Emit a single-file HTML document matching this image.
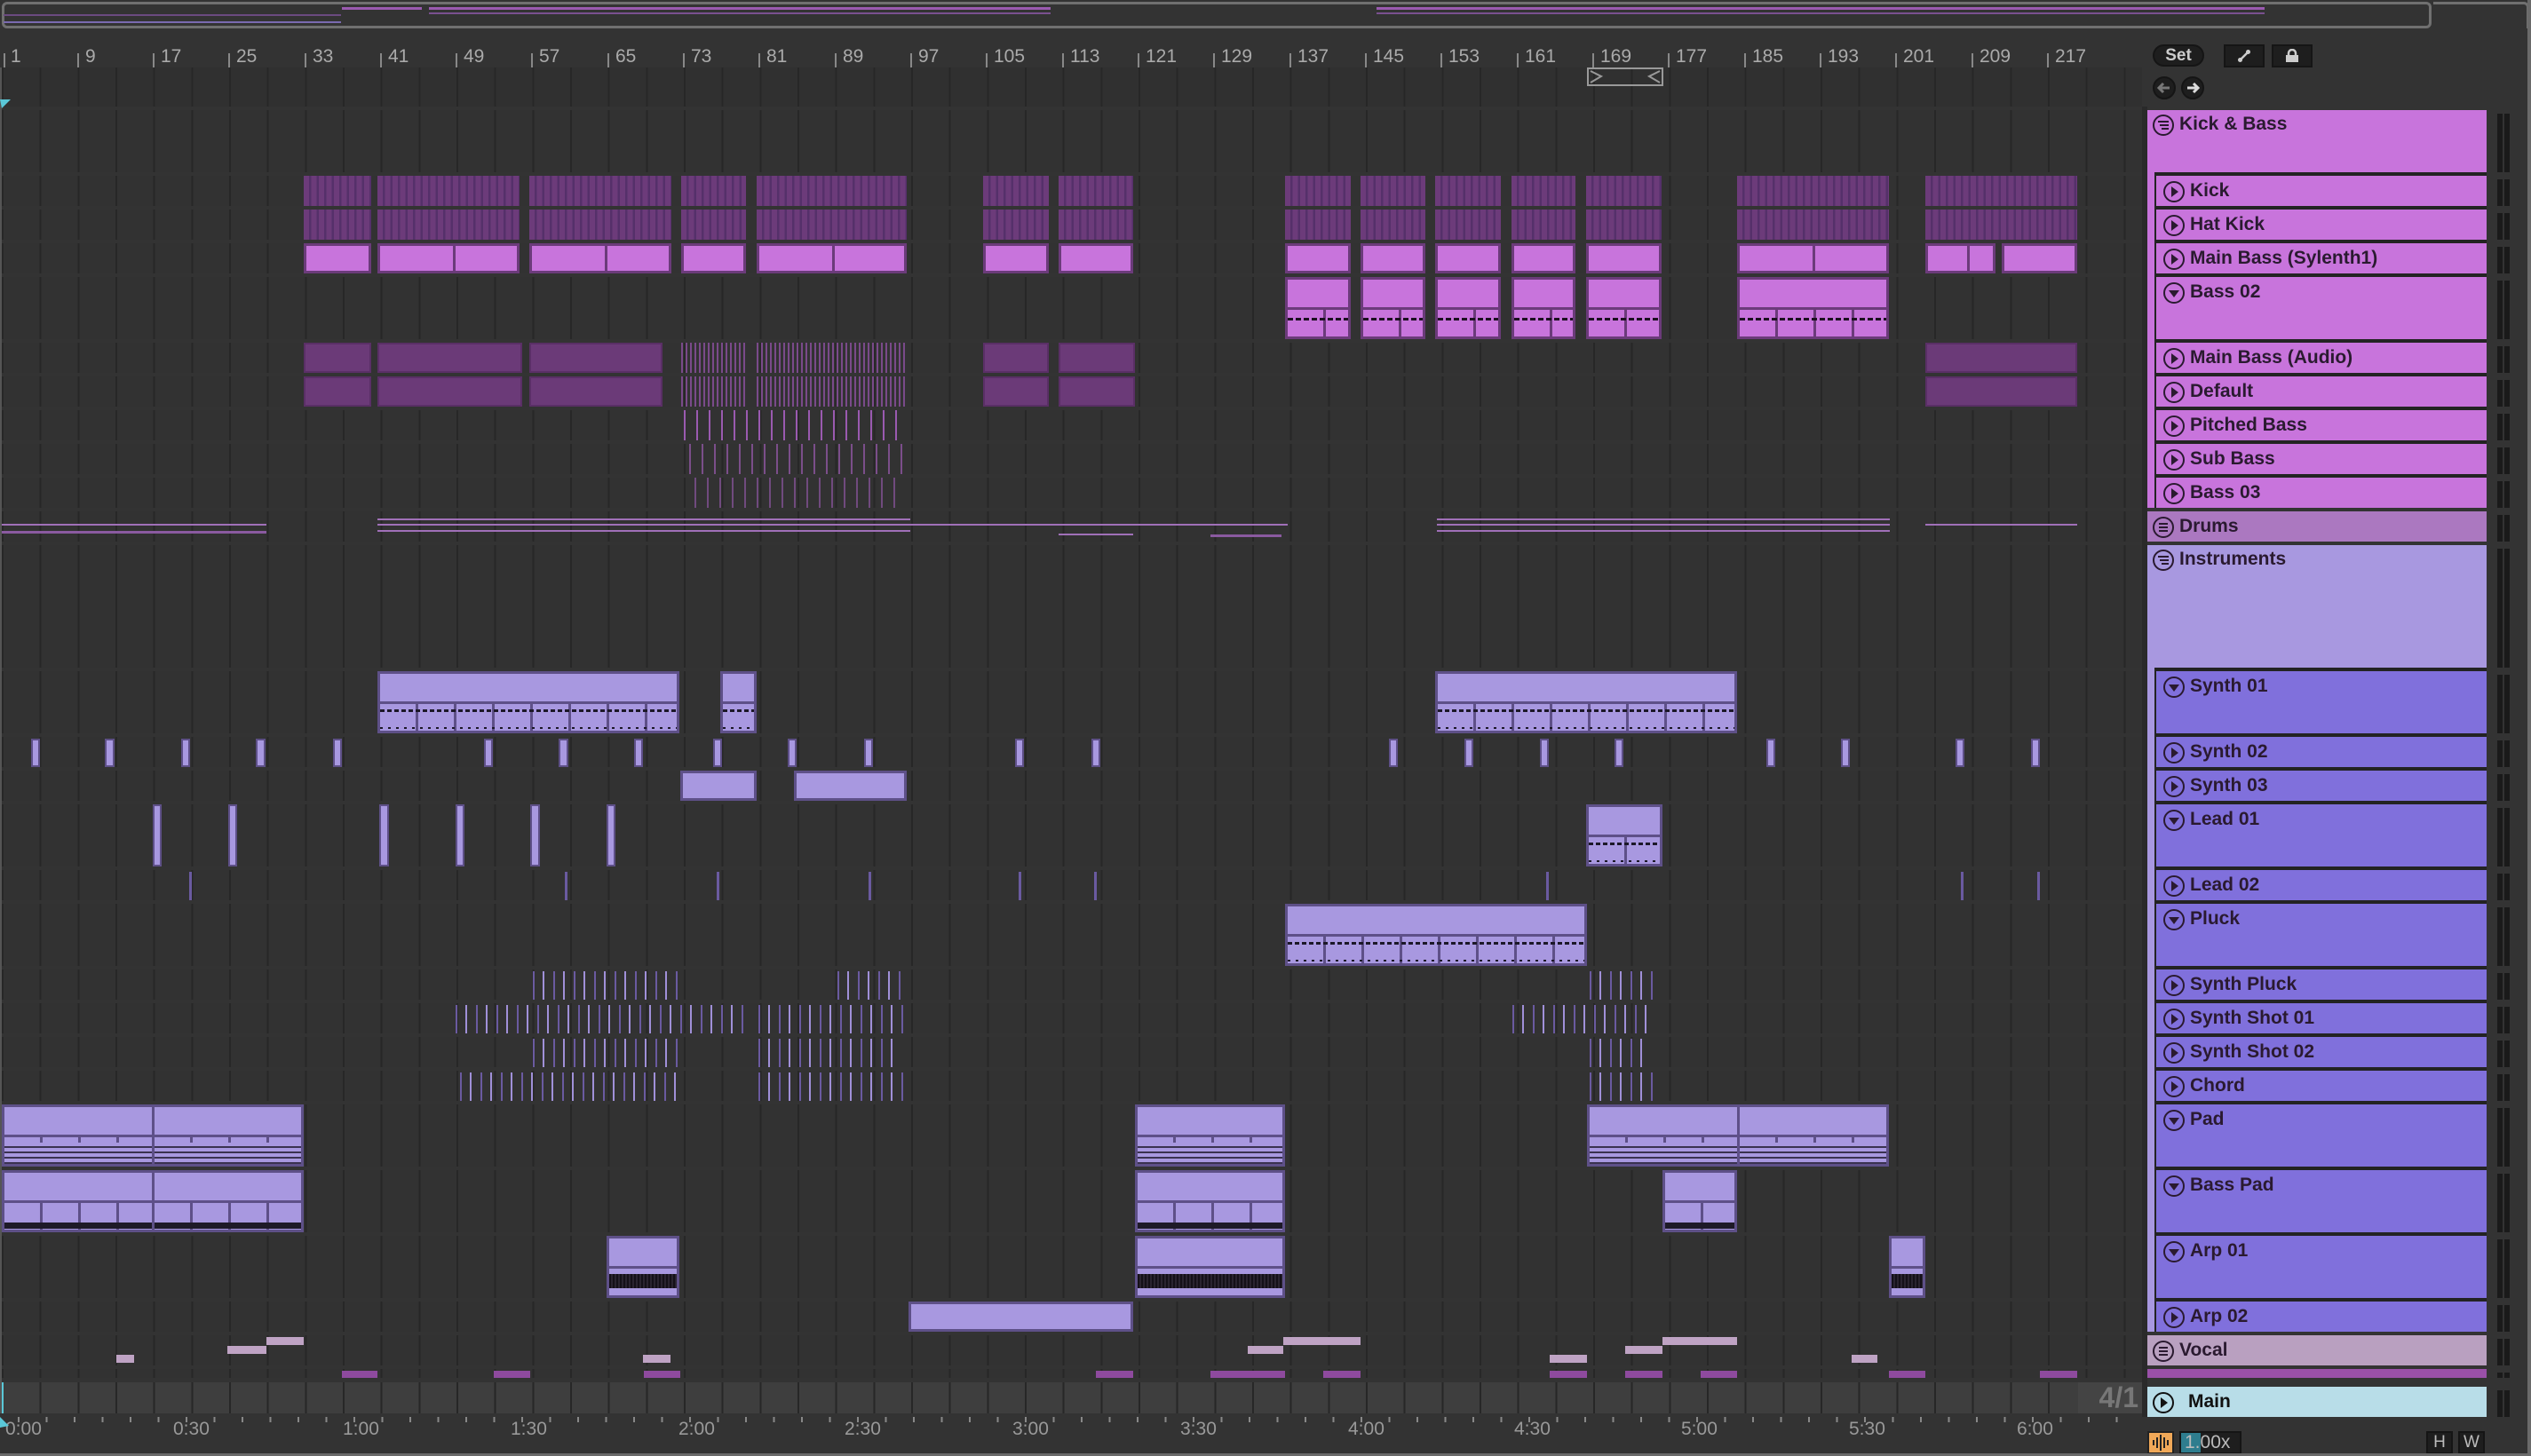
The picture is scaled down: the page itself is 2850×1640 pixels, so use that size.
<!DOCTYPE html>
<html><head><meta charset="utf-8"><style>
*{margin:0;padding:0;box-sizing:border-box}
body{width:2850px;height:1640px;background:#333;position:relative;overflow:hidden;font-family:"Liberation Sans",sans-serif}
div{position:absolute}
.r{left:2px;width:2410px;background:#323232 repeating-linear-gradient(90deg,#272727 0 2px,transparent 2px 42.667px)}
.k{background:repeating-linear-gradient(90deg,#6c3b7a 0 6px,#55306a 6px 8.5px)}
.z{background:repeating-linear-gradient(90deg,#7a4a8a 0 2px,transparent 2px 5px)}
.zs{background:repeating-linear-gradient(90deg,#9a5ab0 0 2px,transparent 2px 14px)}
.P{background:#c874dc;border:3px solid #6b3b7a}
.P2{background:linear-gradient(#6b3b7a,#6b3b7a) 0 31px/100% 3px no-repeat,repeating-linear-gradient(90deg,#1c1020 0 6px,transparent 6px 9px) 0 43px/100% 3px no-repeat,repeating-linear-gradient(90deg,transparent 0 40px,#6b3b7a 40px 43px) 0 34px/100% 100% no-repeat,#c874dc;border:3px solid #6b3b7a}
.D{background:#6b3a78;border:2px solid #5a2f66}
.L{background:#a898e0;border:3px solid #5e5088}
.L2{background:linear-gradient(#5e5088,#5e5088) 0 31px/100% 3px no-repeat,repeating-linear-gradient(90deg,#1c1828 0 5px,transparent 5px 8px) 0 40px/100% 3px no-repeat,repeating-linear-gradient(90deg,#1c1828 0 3px,transparent 3px 9px) 0 60px/100% 2px no-repeat,repeating-linear-gradient(90deg,transparent 0 40px,#5e5088 40px 43px) 0 34px/100% 100% no-repeat,#a898e0;border:3px solid #5e5088}
.LP{background:linear-gradient(#5e5088,#5e5088) 0 31px/100% 3px no-repeat,repeating-linear-gradient(#a898e0 0 4px,#3a3250 4px 6px) 0 40px/100% 24px no-repeat,repeating-linear-gradient(90deg,transparent 0 40px,#5e5088 40px 43px) 0 34px/100% 100% no-repeat,#a898e0;border:3px solid #5e5088}
.LB{background:linear-gradient(#5e5088,#5e5088) 0 31px/100% 3px no-repeat,linear-gradient(#1e1a28,#1e1a28) 0 56px/100% 7px no-repeat,repeating-linear-gradient(90deg,transparent 0 40px,#5e5088 40px 43px) 0 34px/100% 100% no-repeat,#a898e0;border:3px solid #5e5088}
.LA{background:linear-gradient(#5e5088,#5e5088) 0 31px/100% 3px no-repeat,repeating-linear-gradient(90deg,#141018 0 2px,#2a2430 2px 4px) 0 40px/100% 16px no-repeat,#a898e0;border:3px solid #5e5088}
.Ls{background:#a898e0;border:2px solid #5e5088}
.ln{width:3px;background:#6a5aa0}
.S{background:repeating-linear-gradient(90deg,#6a5aa0 0 2px,transparent 2px 11px,#a090d8 11px 13px,transparent 13px 23px)}
.V{height:9px;background:#bfa3c4}
.M{background:#8e4a9e}
.h{font-size:21px;font-weight:bold;color:#2a1a30;padding-left:38px;line-height:34px;white-space:nowrap}
.h svg{position:absolute;left:7px;top:5px}
.mt{left:2804px;width:42px;background:#333}
.mt:before,.mt:after{content:"";position:absolute;top:4px;bottom:0;width:6px;background:#1a1a1a}
.mt:before{left:8px}.mt:after{left:16px}
.rn{top:52px;font-size:21px;color:#aaa}
.rt{top:60px;width:2px;height:16px;background:#888}
.tl{top:1598px;font-size:21px;color:#999}
</style></head><body>
<!-- overview -->
<div style="left:2px;top:2px;width:2736px;height:30px;border:3px solid #707070;border-radius:6px;background:#333"></div>
<div style="left:4px;top:16px;width:380px;height:2px;background:#6a4a80"></div>
<div style="left:4px;top:24px;width:380px;height:2px;background:#7a6ab0"></div>
<div style="left:385px;top:8px;width:90px;height:3px;background:#9a5ab0"></div>
<div style="left:483px;top:8px;width:700px;height:3px;background:#9a5ab0"></div>
<div style="left:483px;top:14px;width:700px;height:2px;background:#7a5090"></div>
<div style="left:1550px;top:8px;width:1000px;height:3px;background:#9a5ab0"></div>
<div style="left:1550px;top:14px;width:1000px;height:2px;background:#7a5090"></div>
<div style="left:2740px;top:2px;width:108px;height:30px;border-top:3px solid #707070;border-right:3px solid #707070;border-radius:0 6px 0 0"></div>
<!-- ruler -->
<div class="rn" style="left:12px">1</div><div class="rt" style="left:4px"></div>
<div class="rn" style="left:96px">9</div><div class="rt" style="left:87px"></div>
<div class="rn" style="left:181px">17</div><div class="rt" style="left:172px"></div>
<div class="rn" style="left:266px">25</div><div class="rt" style="left:257px"></div>
<div class="rn" style="left:352px">33</div><div class="rt" style="left:343px"></div>
<div class="rn" style="left:437px">41</div><div class="rt" style="left:428px"></div>
<div class="rn" style="left:522px">49</div><div class="rt" style="left:513px"></div>
<div class="rn" style="left:607px">57</div><div class="rt" style="left:598px"></div>
<div class="rn" style="left:693px">65</div><div class="rt" style="left:684px"></div>
<div class="rn" style="left:778px">73</div><div class="rt" style="left:769px"></div>
<div class="rn" style="left:863px">81</div><div class="rt" style="left:854px"></div>
<div class="rn" style="left:949px">89</div><div class="rt" style="left:940px"></div>
<div class="rn" style="left:1034px">97</div><div class="rt" style="left:1025px"></div>
<div class="rn" style="left:1119px">105</div><div class="rt" style="left:1110px"></div>
<div class="rn" style="left:1205px">113</div><div class="rt" style="left:1196px"></div>
<div class="rn" style="left:1290px">121</div><div class="rt" style="left:1281px"></div>
<div class="rn" style="left:1375px">129</div><div class="rt" style="left:1366px"></div>
<div class="rn" style="left:1461px">137</div><div class="rt" style="left:1452px"></div>
<div class="rn" style="left:1546px">145</div><div class="rt" style="left:1537px"></div>
<div class="rn" style="left:1631px">153</div><div class="rt" style="left:1622px"></div>
<div class="rn" style="left:1717px">161</div><div class="rt" style="left:1708px"></div>
<div class="rn" style="left:1802px">169</div><div class="rt" style="left:1793px"></div>
<div class="rn" style="left:1887px">177</div><div class="rt" style="left:1878px"></div>
<div class="rn" style="left:1973px">185</div><div class="rt" style="left:1964px"></div>
<div class="rn" style="left:2058px">193</div><div class="rt" style="left:2049px"></div>
<div class="rn" style="left:2143px">201</div><div class="rt" style="left:2134px"></div>
<div class="rn" style="left:2229px">209</div><div class="rt" style="left:2220px"></div>
<div class="rn" style="left:2314px">217</div><div class="rt" style="left:2305px"></div>
<!-- rows -->
<div class="r" style="top:76px;height:44px;background-color:#303030"></div>
<div class="r" style="top:124px;height:70px"></div>
<div class="r" style="top:198px;height:34px"></div><div class="r" style="top:236px;height:34px"></div>
<div class="r" style="top:274px;height:34px"></div><div class="r" style="top:312px;height:70px"></div>
<div class="r" style="top:386px;height:34px"></div><div class="r" style="top:424px;height:34px"></div>
<div class="r" style="top:462px;height:34px"></div><div class="r" style="top:500px;height:34px"></div>
<div class="r" style="top:538px;height:34px"></div><div class="r" style="top:576px;height:34px"></div>
<div class="r" style="top:614px;height:138px"></div><div class="r" style="top:756px;height:70px"></div>
<div class="r" style="top:830px;height:34px"></div><div class="r" style="top:868px;height:34px"></div>
<div class="r" style="top:906px;height:70px"></div><div class="r" style="top:980px;height:34px"></div>
<div class="r" style="top:1018px;height:70px"></div><div class="r" style="top:1092px;height:34px"></div>
<div class="r" style="top:1130px;height:34px"></div><div class="r" style="top:1168px;height:34px"></div>
<div class="r" style="top:1206px;height:34px"></div><div class="r" style="top:1244px;height:70px"></div>
<div class="r" style="top:1318px;height:70px"></div><div class="r" style="top:1392px;height:70px"></div>
<div class="r" style="top:1466px;height:34px"></div><div class="r" style="top:1504px;height:34px"></div>
<div class="r" style="top:1542px;height:10px"></div>
<div class="r" style="top:1557px;height:35px;background-color:#3e3e3e"></div>
<div style="left:2340px;top:1557px;width:72px;height:35px;background:#444;color:#777;font-weight:bold;font-size:32px;line-height:35px;text-align:right;padding-right:4px">4/1</div>
<div style="left:0;top:1557px;width:4px;height:35px;background:#5ac8d8"></div>
<div style="left:0;top:76px;width:2px;height:1516px;background:#555"></div>
<svg style="position:absolute;left:0;top:112px" width="12" height="10"><polygon points="0,0 12,0 2,10" fill="#5ac8d8"/></svg>
<!-- loop brace -->
<div style="left:1787px;top:76px;width:86px;height:21px;border:2px solid #999"></div>
<svg style="position:absolute;left:1789px;top:78px" width="82" height="17"><polyline points="2,2 14,8 2,15" fill="none" stroke="#999" stroke-width="2"/><polyline points="80,2 68,8 80,15" fill="none" stroke="#999" stroke-width="2"/></svg>

<!-- Kick/Hat stripes -->
<div class="k" style="left:342px;top:198px;width:76px;height:34px"></div><div class="k" style="left:342px;top:236px;width:76px;height:34px"></div>
<div class="k" style="left:425px;top:198px;width:160px;height:34px"></div><div class="k" style="left:425px;top:236px;width:160px;height:34px"></div>
<div class="k" style="left:596px;top:198px;width:160px;height:34px"></div><div class="k" style="left:596px;top:236px;width:160px;height:34px"></div>
<div class="k" style="left:767px;top:198px;width:73px;height:34px"></div><div class="k" style="left:767px;top:236px;width:73px;height:34px"></div>
<div class="k" style="left:852px;top:198px;width:169px;height:34px"></div><div class="k" style="left:852px;top:236px;width:169px;height:34px"></div>
<div class="k" style="left:1107px;top:198px;width:74px;height:34px"></div><div class="k" style="left:1107px;top:236px;width:74px;height:34px"></div>
<div class="k" style="left:1192px;top:198px;width:84px;height:34px"></div><div class="k" style="left:1192px;top:236px;width:84px;height:34px"></div>
<div class="k" style="left:1447px;top:198px;width:74px;height:34px"></div><div class="k" style="left:1447px;top:236px;width:74px;height:34px"></div>
<div class="k" style="left:1532px;top:198px;width:73px;height:34px"></div><div class="k" style="left:1532px;top:236px;width:73px;height:34px"></div>
<div class="k" style="left:1616px;top:198px;width:74px;height:34px"></div><div class="k" style="left:1616px;top:236px;width:74px;height:34px"></div>
<div class="k" style="left:1702px;top:198px;width:72px;height:34px"></div><div class="k" style="left:1702px;top:236px;width:72px;height:34px"></div>
<div class="k" style="left:1786px;top:198px;width:85px;height:34px"></div><div class="k" style="left:1786px;top:236px;width:85px;height:34px"></div>
<div class="k" style="left:1956px;top:198px;width:171px;height:34px"></div><div class="k" style="left:1956px;top:236px;width:171px;height:34px"></div>
<div class="k" style="left:2168px;top:198px;width:171px;height:34px"></div><div class="k" style="left:2168px;top:236px;width:171px;height:34px"></div>
<!-- Main Bass pink -->
<div class="P" style="left:342px;top:274px;width:76px;height:34px"></div>
<div class="P" style="left:425px;top:274px;width:88px;height:34px"></div><div class="P" style="left:510px;top:274px;width:75px;height:34px"></div>
<div class="P" style="left:596px;top:274px;width:88px;height:34px"></div><div class="P" style="left:681px;top:274px;width:75px;height:34px"></div>
<div class="P" style="left:767px;top:274px;width:73px;height:34px"></div>
<div class="P" style="left:852px;top:274px;width:88px;height:34px"></div><div class="P" style="left:937px;top:274px;width:84px;height:34px"></div>
<div class="P" style="left:1107px;top:274px;width:74px;height:34px"></div>
<div class="P" style="left:1192px;top:274px;width:84px;height:34px"></div>
<div class="P" style="left:1447px;top:274px;width:74px;height:34px"></div>
<div class="P" style="left:1532px;top:274px;width:73px;height:34px"></div>
<div class="P" style="left:1616px;top:274px;width:74px;height:34px"></div>
<div class="P" style="left:1702px;top:274px;width:72px;height:34px"></div>
<div class="P" style="left:1786px;top:274px;width:85px;height:34px"></div>
<div class="P" style="left:1956px;top:274px;width:88px;height:34px"></div><div class="P" style="left:2041px;top:274px;width:86px;height:34px"></div>
<div class="P" style="left:2168px;top:274px;width:50px;height:34px"></div><div class="P" style="left:2215px;top:274px;width:32px;height:34px"></div><div class="P" style="left:2254px;top:274px;width:85px;height:34px"></div>
<!-- Bass 02 -->
<div class="P2" style="left:1447px;top:312px;width:74px;height:70px"></div>
<div class="P2" style="left:1532px;top:312px;width:73px;height:70px"></div>
<div class="P2" style="left:1616px;top:312px;width:74px;height:70px"></div>
<div class="P2" style="left:1702px;top:312px;width:72px;height:70px"></div>
<div class="P2" style="left:1786px;top:312px;width:85px;height:70px"></div>
<div class="P2" style="left:1956px;top:312px;width:171px;height:70px"></div>
<!-- Main Bass Audio / Default -->
<div class="D" style="left:342px;top:386px;width:76px;height:34px"></div><div class="D" style="left:342px;top:424px;width:76px;height:34px"></div>
<div class="D" style="left:425px;top:386px;width:163px;height:34px"></div><div class="D" style="left:425px;top:424px;width:163px;height:34px"></div>
<div class="D" style="left:596px;top:386px;width:150px;height:34px"></div><div class="D" style="left:596px;top:424px;width:150px;height:34px"></div>
<div class="D" style="left:1107px;top:386px;width:74px;height:34px"></div><div class="D" style="left:1107px;top:424px;width:74px;height:34px"></div>
<div class="D" style="left:1192px;top:386px;width:86px;height:34px"></div><div class="D" style="left:1192px;top:424px;width:86px;height:34px"></div>
<div class="D" style="left:2168px;top:386px;width:171px;height:34px"></div><div class="D" style="left:2168px;top:424px;width:171px;height:34px"></div>
<div class="z" style="left:767px;top:386px;width:73px;height:34px"></div><div class="z" style="left:767px;top:424px;width:73px;height:34px"></div>
<div class="z" style="left:852px;top:386px;width:169px;height:34px"></div><div class="z" style="left:852px;top:424px;width:169px;height:34px"></div>
<div class="zs" style="left:770px;top:462px;width:250px;height:34px"></div>
<div class="zs" style="left:776px;top:500px;width:244px;height:34px;opacity:.7"></div>
<div class="zs" style="left:782px;top:538px;width:238px;height:34px;opacity:.6"></div>
<!-- Drums summary -->
<div style="left:2px;top:590px;width:298px;height:2px;background:#a070b8"></div>
<div style="left:2px;top:598px;width:298px;height:3px;background:#8a5aa0"></div>
<div style="left:425px;top:584px;width:600px;height:2px;background:#a070b8"></div>
<div style="left:425px;top:590px;width:600px;height:2px;background:#a070b8"></div>
<div style="left:425px;top:597px;width:600px;height:2px;background:#a070b8"></div>
<div style="left:1020px;top:590px;width:430px;height:2px;background:#a070b8"></div>
<div style="left:1192px;top:601px;width:84px;height:2px;background:#a070b8"></div>
<div style="left:1363px;top:602px;width:80px;height:3px;background:#8a5aa0"></div>
<div style="left:1618px;top:584px;width:510px;height:2px;background:#a070b8"></div>
<div style="left:1618px;top:590px;width:510px;height:2px;background:#a070b8"></div>
<div style="left:1618px;top:597px;width:510px;height:2px;background:#a070b8"></div>
<div style="left:2168px;top:590px;width:171px;height:2px;background:#a070b8"></div>
<!-- Synth 01 -->
<div class="L2" style="left:425px;top:756px;width:340px;height:70px"></div>
<div class="L2" style="left:811px;top:756px;width:41px;height:70px"></div>
<div class="L2" style="left:1616px;top:756px;width:340px;height:70px"></div>
<!-- Synth 02 small -->
<div class="Ls" style="left:35px;top:832px;width:10px;height:32px"></div><div class="Ls" style="left:118px;top:832px;width:11px;height:32px"></div>
<div class="Ls" style="left:204px;top:832px;width:10px;height:32px"></div><div class="Ls" style="left:288px;top:832px;width:11px;height:32px"></div>
<div class="Ls" style="left:375px;top:832px;width:10px;height:32px"></div><div class="Ls" style="left:545px;top:832px;width:10px;height:32px"></div>
<div class="Ls" style="left:629px;top:832px;width:11px;height:32px"></div><div class="Ls" style="left:714px;top:832px;width:10px;height:32px"></div>
<div class="Ls" style="left:803px;top:832px;width:10px;height:32px"></div><div class="Ls" style="left:887px;top:832px;width:10px;height:32px"></div>
<div class="Ls" style="left:973px;top:832px;width:10px;height:32px"></div><div class="Ls" style="left:1143px;top:832px;width:10px;height:32px"></div>
<div class="Ls" style="left:1229px;top:832px;width:10px;height:32px"></div><div class="Ls" style="left:1564px;top:832px;width:10px;height:32px"></div>
<div class="Ls" style="left:1649px;top:832px;width:10px;height:32px"></div><div class="Ls" style="left:1734px;top:832px;width:10px;height:32px"></div>
<div class="Ls" style="left:1818px;top:832px;width:10px;height:32px"></div><div class="Ls" style="left:1989px;top:832px;width:10px;height:32px"></div>
<div class="Ls" style="left:2073px;top:832px;width:10px;height:32px"></div><div class="Ls" style="left:2202px;top:832px;width:10px;height:32px"></div>
<div class="Ls" style="left:2287px;top:832px;width:10px;height:32px"></div>
<!-- Synth 03 -->
<div class="L" style="left:766px;top:868px;width:86px;height:34px"></div>
<div class="L" style="left:894px;top:868px;width:127px;height:34px"></div>
<!-- Lead 01 -->
<div class="Ls" style="left:172px;top:906px;width:10px;height:70px"></div><div class="Ls" style="left:257px;top:906px;width:10px;height:70px"></div>
<div class="Ls" style="left:427px;top:906px;width:11px;height:70px"></div><div class="Ls" style="left:513px;top:906px;width:10px;height:70px"></div>
<div class="Ls" style="left:597px;top:906px;width:11px;height:70px"></div><div class="Ls" style="left:683px;top:906px;width:10px;height:70px"></div>
<div class="L2" style="left:1786px;top:906px;width:86px;height:70px"></div>
<!-- Lead 02 lines -->
<div class="ln" style="left:213px;top:982px;height:32px"></div><div class="ln" style="left:636px;top:982px;height:32px"></div>
<div class="ln" style="left:807px;top:982px;height:32px"></div><div class="ln" style="left:978px;top:982px;height:32px"></div>
<div class="ln" style="left:1147px;top:982px;height:32px"></div><div class="ln" style="left:1232px;top:982px;height:32px"></div>
<div class="ln" style="left:1741px;top:982px;height:32px"></div><div class="ln" style="left:2208px;top:982px;height:32px"></div>
<div class="ln" style="left:2294px;top:982px;height:32px"></div>
<!-- Pluck -->
<div class="L2" style="left:1447px;top:1018px;width:340px;height:70px"></div>
<!-- stripes rows 18-21 -->
<div class="S" style="left:600px;top:1094px;width:164px;height:32px"></div><div class="S" style="left:943px;top:1094px;width:72px;height:32px"></div><div class="S" style="left:1790px;top:1094px;width:73px;height:32px"></div>
<div class="S" style="left:513px;top:1132px;width:332px;height:32px"></div><div class="S" style="left:854px;top:1132px;width:164px;height:32px"></div><div class="S" style="left:1703px;top:1132px;width:152px;height:32px"></div>
<div class="S" style="left:600px;top:1170px;width:164px;height:32px"></div><div class="S" style="left:854px;top:1170px;width:155px;height:32px"></div><div class="S" style="left:1790px;top:1170px;width:65px;height:32px"></div>
<div class="S" style="left:518px;top:1208px;width:246px;height:32px"></div><div class="S" style="left:854px;top:1208px;width:164px;height:32px"></div><div class="S" style="left:1790px;top:1208px;width:79px;height:32px"></div>
<!-- Pad -->
<div class="LP" style="left:2px;top:1244px;width:172px;height:70px"></div><div class="LP" style="left:171px;top:1244px;width:171px;height:70px"></div>
<div class="LP" style="left:1278px;top:1244px;width:169px;height:70px"></div>
<div class="LP" style="left:1787px;top:1244px;width:172px;height:70px"></div><div class="LP" style="left:1956px;top:1244px;width:171px;height:70px"></div>
<!-- Bass Pad -->
<div class="LB" style="left:2px;top:1318px;width:172px;height:70px"></div><div class="LB" style="left:171px;top:1318px;width:171px;height:70px"></div>
<div class="LB" style="left:1278px;top:1318px;width:169px;height:70px"></div>
<div class="LB" style="left:1872px;top:1318px;width:84px;height:70px"></div>
<!-- Arp 01 -->
<div class="LA" style="left:683px;top:1392px;width:82px;height:70px"></div>
<div class="LA" style="left:1278px;top:1392px;width:169px;height:70px"></div>
<div class="LA" style="left:2127px;top:1392px;width:41px;height:70px"></div>
<!-- Arp 02 -->
<div class="L" style="left:1023px;top:1466px;width:253px;height:34px"></div>
<!-- Vocal -->
<div class="V" style="left:131px;top:1526px;width:20px"></div><div class="V" style="left:256px;top:1516px;width:44px"></div>
<div class="V" style="left:300px;top:1506px;width:42px"></div><div class="V" style="left:724px;top:1526px;width:31px"></div>
<div class="V" style="left:1405px;top:1516px;width:40px"></div><div class="V" style="left:1445px;top:1506px;width:87px"></div>
<div class="V" style="left:1745px;top:1526px;width:42px"></div><div class="V" style="left:1830px;top:1516px;width:42px"></div>
<div class="V" style="left:1872px;top:1506px;width:84px"></div><div class="V" style="left:2085px;top:1526px;width:29px"></div>
<!-- partial -->
<div class="M" style="left:385px;top:1544px;width:40px;height:8px"></div><div class="M" style="left:556px;top:1544px;width:41px;height:8px"></div>
<div class="M" style="left:725px;top:1544px;width:41px;height:8px"></div><div class="M" style="left:1234px;top:1544px;width:42px;height:8px"></div>
<div class="M" style="left:1363px;top:1544px;width:84px;height:8px"></div><div class="M" style="left:1490px;top:1544px;width:42px;height:8px"></div>
<div class="M" style="left:1745px;top:1544px;width:42px;height:8px"></div><div class="M" style="left:1830px;top:1544px;width:42px;height:8px"></div>
<div class="M" style="left:1915px;top:1544px;width:41px;height:8px"></div><div class="M" style="left:2127px;top:1544px;width:41px;height:8px"></div>
<div class="M" style="left:2297px;top:1544px;width:42px;height:8px"></div>

<!-- time ruler -->
<div style="left:0;top:1596px;width:2412px;height:42px;background:repeating-linear-gradient(90deg,#888 0 2px,transparent 2px 31.5px) 20px 0/100% 6px no-repeat"></div>
<div class="tl" style="left:6px">0:00</div><div class="tl" style="left:195px">0:30</div><div class="tl" style="left:386px">1:00</div>
<div class="tl" style="left:575px">1:30</div><div class="tl" style="left:764px">2:00</div><div class="tl" style="left:951px">2:30</div>
<div class="tl" style="left:1140px">3:00</div><div class="tl" style="left:1329px">3:30</div><div class="tl" style="left:1518px">4:00</div>
<div class="tl" style="left:1705px">4:30</div><div class="tl" style="left:1893px">5:00</div><div class="tl" style="left:2082px">5:30</div>
<div class="tl" style="left:2271px">6:00</div>
<svg style="position:absolute;left:0;top:1596px" width="12" height="12"><polygon points="0,0 10,10 0,12" fill="#5ac8d8"/></svg>

<!-- top right controls -->
<div style="left:2424px;top:50px;width:58px;height:25px;border-radius:13px;background:#1e1e1e;border:2px solid #151515;color:#ccc;font-size:19px;font-weight:bold;text-align:center;line-height:21px">Set</div>
<div style="left:2504px;top:50px;width:46px;height:26px;background:#1e1e1e;border:2px solid #151515"></div>
<svg style="position:absolute;left:2519px;top:55px" width="16" height="16"><line x1="3" y1="13" x2="13" y2="3" stroke="#ccc" stroke-width="2.5"/><circle cx="3.5" cy="12.5" r="2.5" fill="#ccc"/><circle cx="12.5" cy="3.5" r="2.5" fill="#ccc"/></svg>
<div style="left:2558px;top:50px;width:46px;height:26px;background:#1e1e1e;border:2px solid #151515"></div>
<svg style="position:absolute;left:2573px;top:55px" width="16" height="16"><path d="M4 8V5a4 4 0 0 1 8 0v3" fill="none" stroke="#ccc" stroke-width="2.5"/><rect x="1" y="7" width="14" height="8" fill="#ccc"/></svg>
<svg style="position:absolute;left:2424px;top:86px" width="60" height="26"><circle cx="13" cy="13" r="12" fill="#1e1e1e" stroke="#151515" stroke-width="2"/><path d="M19 13H8M12 8l-5 5 5 5" fill="none" stroke="#777" stroke-width="3"/><circle cx="45" cy="13" r="12" fill="#1e1e1e" stroke="#151515" stroke-width="2"/><path d="M39 13h11M46 8l5 5-5 5" fill="none" stroke="#ddd" stroke-width="3"/></svg>

<!-- header panel -->
<div style="left:2412px;top:120px;width:6px;height:1476px;background:#2a2a2a"></div>
<div style="left:2418px;top:124px;width:382px;height:448px;background:#c874dc"></div>
<div style="left:2426px;top:194px;width:374px;height:378px;background:#232323"></div>
<div class="h" style="left:2418px;top:124px;width:382px;height:70px;background:#c874dc;padding-left:36px;line-height:32px"><svg width="26" height="26" style="left:5px;top:4px"><circle cx="13" cy="13" r="11" fill="none" stroke="#2a1a30" stroke-width="2"/><path d="M7 9h12M9 13h10M11 17h8" stroke="#2a1a30" stroke-width="2"/></svg>Kick &amp; Bass</div>

<div class="h" style="left:2428px;top:198px;width:372px;height:34px;background:#c874dc"><svg width="26" height="26"><circle cx="13" cy="13" r="11" fill="none" stroke="#2a1a30" stroke-width="2"/><path d="M10 7l8 6-8 6z" fill="#2a1a30"/></svg>Kick</div>
<div class="h" style="left:2428px;top:236px;width:372px;height:34px;background:#c874dc"><svg width="26" height="26"><circle cx="13" cy="13" r="11" fill="none" stroke="#2a1a30" stroke-width="2"/><path d="M10 7l8 6-8 6z" fill="#2a1a30"/></svg>Hat Kick</div>
<div class="h" style="left:2428px;top:274px;width:372px;height:34px;background:#c874dc"><svg width="26" height="26"><circle cx="13" cy="13" r="11" fill="none" stroke="#2a1a30" stroke-width="2"/><path d="M10 7l8 6-8 6z" fill="#2a1a30"/></svg>Main Bass (Sylenth1)</div>
<div class="h" style="left:2428px;top:312px;width:372px;height:70px;background:#c874dc"><svg width="26" height="26"><circle cx="13" cy="13" r="11" fill="none" stroke="#2a1a30" stroke-width="2"/><path d="M7 10h12l-6 8z" fill="#2a1a30"/></svg>Bass 02</div>
<div class="h" style="left:2428px;top:386px;width:372px;height:34px;background:#c874dc"><svg width="26" height="26"><circle cx="13" cy="13" r="11" fill="none" stroke="#2a1a30" stroke-width="2"/><path d="M10 7l8 6-8 6z" fill="#2a1a30"/></svg>Main Bass (Audio)</div>
<div class="h" style="left:2428px;top:424px;width:372px;height:34px;background:#c874dc"><svg width="26" height="26"><circle cx="13" cy="13" r="11" fill="none" stroke="#2a1a30" stroke-width="2"/><path d="M10 7l8 6-8 6z" fill="#2a1a30"/></svg>Default</div>
<div class="h" style="left:2428px;top:462px;width:372px;height:34px;background:#c874dc"><svg width="26" height="26"><circle cx="13" cy="13" r="11" fill="none" stroke="#2a1a30" stroke-width="2"/><path d="M10 7l8 6-8 6z" fill="#2a1a30"/></svg>Pitched Bass</div>
<div class="h" style="left:2428px;top:500px;width:372px;height:34px;background:#c874dc"><svg width="26" height="26"><circle cx="13" cy="13" r="11" fill="none" stroke="#2a1a30" stroke-width="2"/><path d="M10 7l8 6-8 6z" fill="#2a1a30"/></svg>Sub Bass</div>
<div class="h" style="left:2428px;top:538px;width:372px;height:34px;background:#c874dc"><svg width="26" height="26"><circle cx="13" cy="13" r="11" fill="none" stroke="#2a1a30" stroke-width="2"/><path d="M10 7l8 6-8 6z" fill="#2a1a30"/></svg>Bass 03</div>

<div class="h" style="left:2418px;top:576px;width:382px;height:34px;background:#ab78c0;padding-left:36px"><svg width="26" height="26" style="left:5px"><circle cx="13" cy="13" r="11" fill="none" stroke="#2a1a30" stroke-width="2"/><path d="M8 9h10M8 13h10M8 17h10" stroke="#2a1a30" stroke-width="2"/></svg>Drums</div>

<div style="left:2418px;top:614px;width:382px;height:886px;background:#a898e0"></div>
<div style="left:2426px;top:752px;width:374px;height:748px;background:#232323"></div>
<div class="h" style="left:2418px;top:614px;width:382px;height:138px;background:#a898e0;padding-left:36px;line-height:32px"><svg width="26" height="26" style="left:5px;top:4px"><circle cx="13" cy="13" r="11" fill="none" stroke="#2a1a30" stroke-width="2"/><path d="M7 9h12M9 13h10M11 17h8" stroke="#2a1a30" stroke-width="2"/></svg>Instruments</div>

<div class="h" style="left:2428px;top:756px;width:372px;height:70px;background:#8070dc"><svg width="26" height="26"><circle cx="13" cy="13" r="11" fill="none" stroke="#2a1a30" stroke-width="2"/><path d="M7 10h12l-6 8z" fill="#2a1a30"/></svg>Synth 01</div>
<div class="h" style="left:2428px;top:830px;width:372px;height:34px;background:#8070dc"><svg width="26" height="26"><circle cx="13" cy="13" r="11" fill="none" stroke="#2a1a30" stroke-width="2"/><path d="M10 7l8 6-8 6z" fill="#2a1a30"/></svg>Synth 02</div>
<div class="h" style="left:2428px;top:868px;width:372px;height:34px;background:#8070dc"><svg width="26" height="26"><circle cx="13" cy="13" r="11" fill="none" stroke="#2a1a30" stroke-width="2"/><path d="M10 7l8 6-8 6z" fill="#2a1a30"/></svg>Synth 03</div>
<div class="h" style="left:2428px;top:906px;width:372px;height:70px;background:#8070dc"><svg width="26" height="26"><circle cx="13" cy="13" r="11" fill="none" stroke="#2a1a30" stroke-width="2"/><path d="M7 10h12l-6 8z" fill="#2a1a30"/></svg>Lead 01</div>
<div class="h" style="left:2428px;top:980px;width:372px;height:34px;background:#8070dc"><svg width="26" height="26"><circle cx="13" cy="13" r="11" fill="none" stroke="#2a1a30" stroke-width="2"/><path d="M10 7l8 6-8 6z" fill="#2a1a30"/></svg>Lead 02</div>
<div class="h" style="left:2428px;top:1018px;width:372px;height:70px;background:#8070dc"><svg width="26" height="26"><circle cx="13" cy="13" r="11" fill="none" stroke="#2a1a30" stroke-width="2"/><path d="M7 10h12l-6 8z" fill="#2a1a30"/></svg>Pluck</div>
<div class="h" style="left:2428px;top:1092px;width:372px;height:34px;background:#8070dc"><svg width="26" height="26"><circle cx="13" cy="13" r="11" fill="none" stroke="#2a1a30" stroke-width="2"/><path d="M10 7l8 6-8 6z" fill="#2a1a30"/></svg>Synth Pluck</div>
<div class="h" style="left:2428px;top:1130px;width:372px;height:34px;background:#8070dc"><svg width="26" height="26"><circle cx="13" cy="13" r="11" fill="none" stroke="#2a1a30" stroke-width="2"/><path d="M10 7l8 6-8 6z" fill="#2a1a30"/></svg>Synth Shot 01</div>
<div class="h" style="left:2428px;top:1168px;width:372px;height:34px;background:#8070dc"><svg width="26" height="26"><circle cx="13" cy="13" r="11" fill="none" stroke="#2a1a30" stroke-width="2"/><path d="M10 7l8 6-8 6z" fill="#2a1a30"/></svg>Synth Shot 02</div>
<div class="h" style="left:2428px;top:1206px;width:372px;height:34px;background:#8070dc"><svg width="26" height="26"><circle cx="13" cy="13" r="11" fill="none" stroke="#2a1a30" stroke-width="2"/><path d="M10 7l8 6-8 6z" fill="#2a1a30"/></svg>Chord</div>
<div class="h" style="left:2428px;top:1244px;width:372px;height:70px;background:#8070dc"><svg width="26" height="26"><circle cx="13" cy="13" r="11" fill="none" stroke="#2a1a30" stroke-width="2"/><path d="M7 10h12l-6 8z" fill="#2a1a30"/></svg>Pad</div>
<div class="h" style="left:2428px;top:1318px;width:372px;height:70px;background:#8070dc"><svg width="26" height="26"><circle cx="13" cy="13" r="11" fill="none" stroke="#2a1a30" stroke-width="2"/><path d="M7 10h12l-6 8z" fill="#2a1a30"/></svg>Bass Pad</div>
<div class="h" style="left:2428px;top:1392px;width:372px;height:70px;background:#8070dc"><svg width="26" height="26"><circle cx="13" cy="13" r="11" fill="none" stroke="#2a1a30" stroke-width="2"/><path d="M7 10h12l-6 8z" fill="#2a1a30"/></svg>Arp 01</div>
<div class="h" style="left:2428px;top:1466px;width:372px;height:34px;background:#8070dc"><svg width="26" height="26"><circle cx="13" cy="13" r="11" fill="none" stroke="#2a1a30" stroke-width="2"/><path d="M10 7l8 6-8 6z" fill="#2a1a30"/></svg>Arp 02</div>

<div class="h" style="left:2418px;top:1504px;width:382px;height:34px;background:#b9a0c0;padding-left:36px"><svg width="26" height="26" style="left:5px"><circle cx="13" cy="13" r="11" fill="none" stroke="#2a1a30" stroke-width="2"/><path d="M8 9h10M8 13h10M8 17h10" stroke="#2a1a30" stroke-width="2"/></svg>Vocal</div>
<div style="left:2418px;top:1542px;width:382px;height:10px;background:#9a50a8"></div>
<div class="h" style="left:2418px;top:1562px;width:382px;height:34px;background:#b8dde8;color:#111;padding-left:46px"><svg width="26" height="26" style="left:5px"><circle cx="13" cy="13" r="11" fill="none" stroke="#111" stroke-width="2"/><path d="M10 7l8 6-8 6z" fill="#111"/></svg>Main</div>

<!-- meters -->
<div class="mt" style="top:124px;height:70px"></div><div class="mt" style="top:198px;height:34px"></div>
<div class="mt" style="top:236px;height:34px"></div><div class="mt" style="top:274px;height:34px"></div>
<div class="mt" style="top:312px;height:70px"></div><div class="mt" style="top:386px;height:34px"></div>
<div class="mt" style="top:424px;height:34px"></div><div class="mt" style="top:462px;height:34px"></div>
<div class="mt" style="top:500px;height:34px"></div><div class="mt" style="top:538px;height:34px"></div>
<div class="mt" style="top:576px;height:34px"></div><div class="mt" style="top:614px;height:138px"></div>
<div class="mt" style="top:756px;height:70px"></div><div class="mt" style="top:830px;height:34px"></div>
<div class="mt" style="top:868px;height:34px"></div><div class="mt" style="top:906px;height:70px"></div>
<div class="mt" style="top:980px;height:34px"></div><div class="mt" style="top:1018px;height:70px"></div>
<div class="mt" style="top:1092px;height:34px"></div><div class="mt" style="top:1130px;height:34px"></div>
<div class="mt" style="top:1168px;height:34px"></div><div class="mt" style="top:1206px;height:34px"></div>
<div class="mt" style="top:1244px;height:70px"></div><div class="mt" style="top:1318px;height:70px"></div>
<div class="mt" style="top:1392px;height:70px"></div><div class="mt" style="top:1466px;height:34px"></div>
<div class="mt" style="top:1504px;height:34px"></div><div class="mt" style="top:1542px;height:10px"></div>
<div class="mt" style="top:1562px;height:34px"></div>

<!-- bottom right -->
<div style="left:2418px;top:1612px;width:30px;height:26px;background:#f0a858;border:2px solid #222"></div>
<svg style="position:absolute;left:2421px;top:1615px" width="24" height="20"><path d="M4 7v6M8 4v12M12 1v18M16 4v12M20 7v6" stroke="#222" stroke-width="2"/></svg>
<div style="left:2454px;top:1612px;width:70px;height:26px;background:#1e1e1e;border:2px solid #151515"></div>
<div style="left:2456px;top:1614px;width:22px;height:22px;background:#2e7d8e"></div>
<div style="left:2460px;top:1612px;font-size:21px;color:#bbb;line-height:26px">1.00x</div>
<div style="left:2732px;top:1612px;width:30px;height:26px;background:#1e1e1e;border:2px solid #151515;color:#bbb;font-size:19px;text-align:center;line-height:22px">H</div>
<div style="left:2768px;top:1612px;width:30px;height:26px;background:#1e1e1e;border:2px solid #151515;color:#bbb;font-size:19px;text-align:center;line-height:22px">W</div>
<div style="left:2846px;top:0;width:4px;height:1640px;background:#6a6a6a"></div>
<div style="left:0;top:1637px;width:2850px;height:3px;background:#6a6a6a"></div>
</body></html>
